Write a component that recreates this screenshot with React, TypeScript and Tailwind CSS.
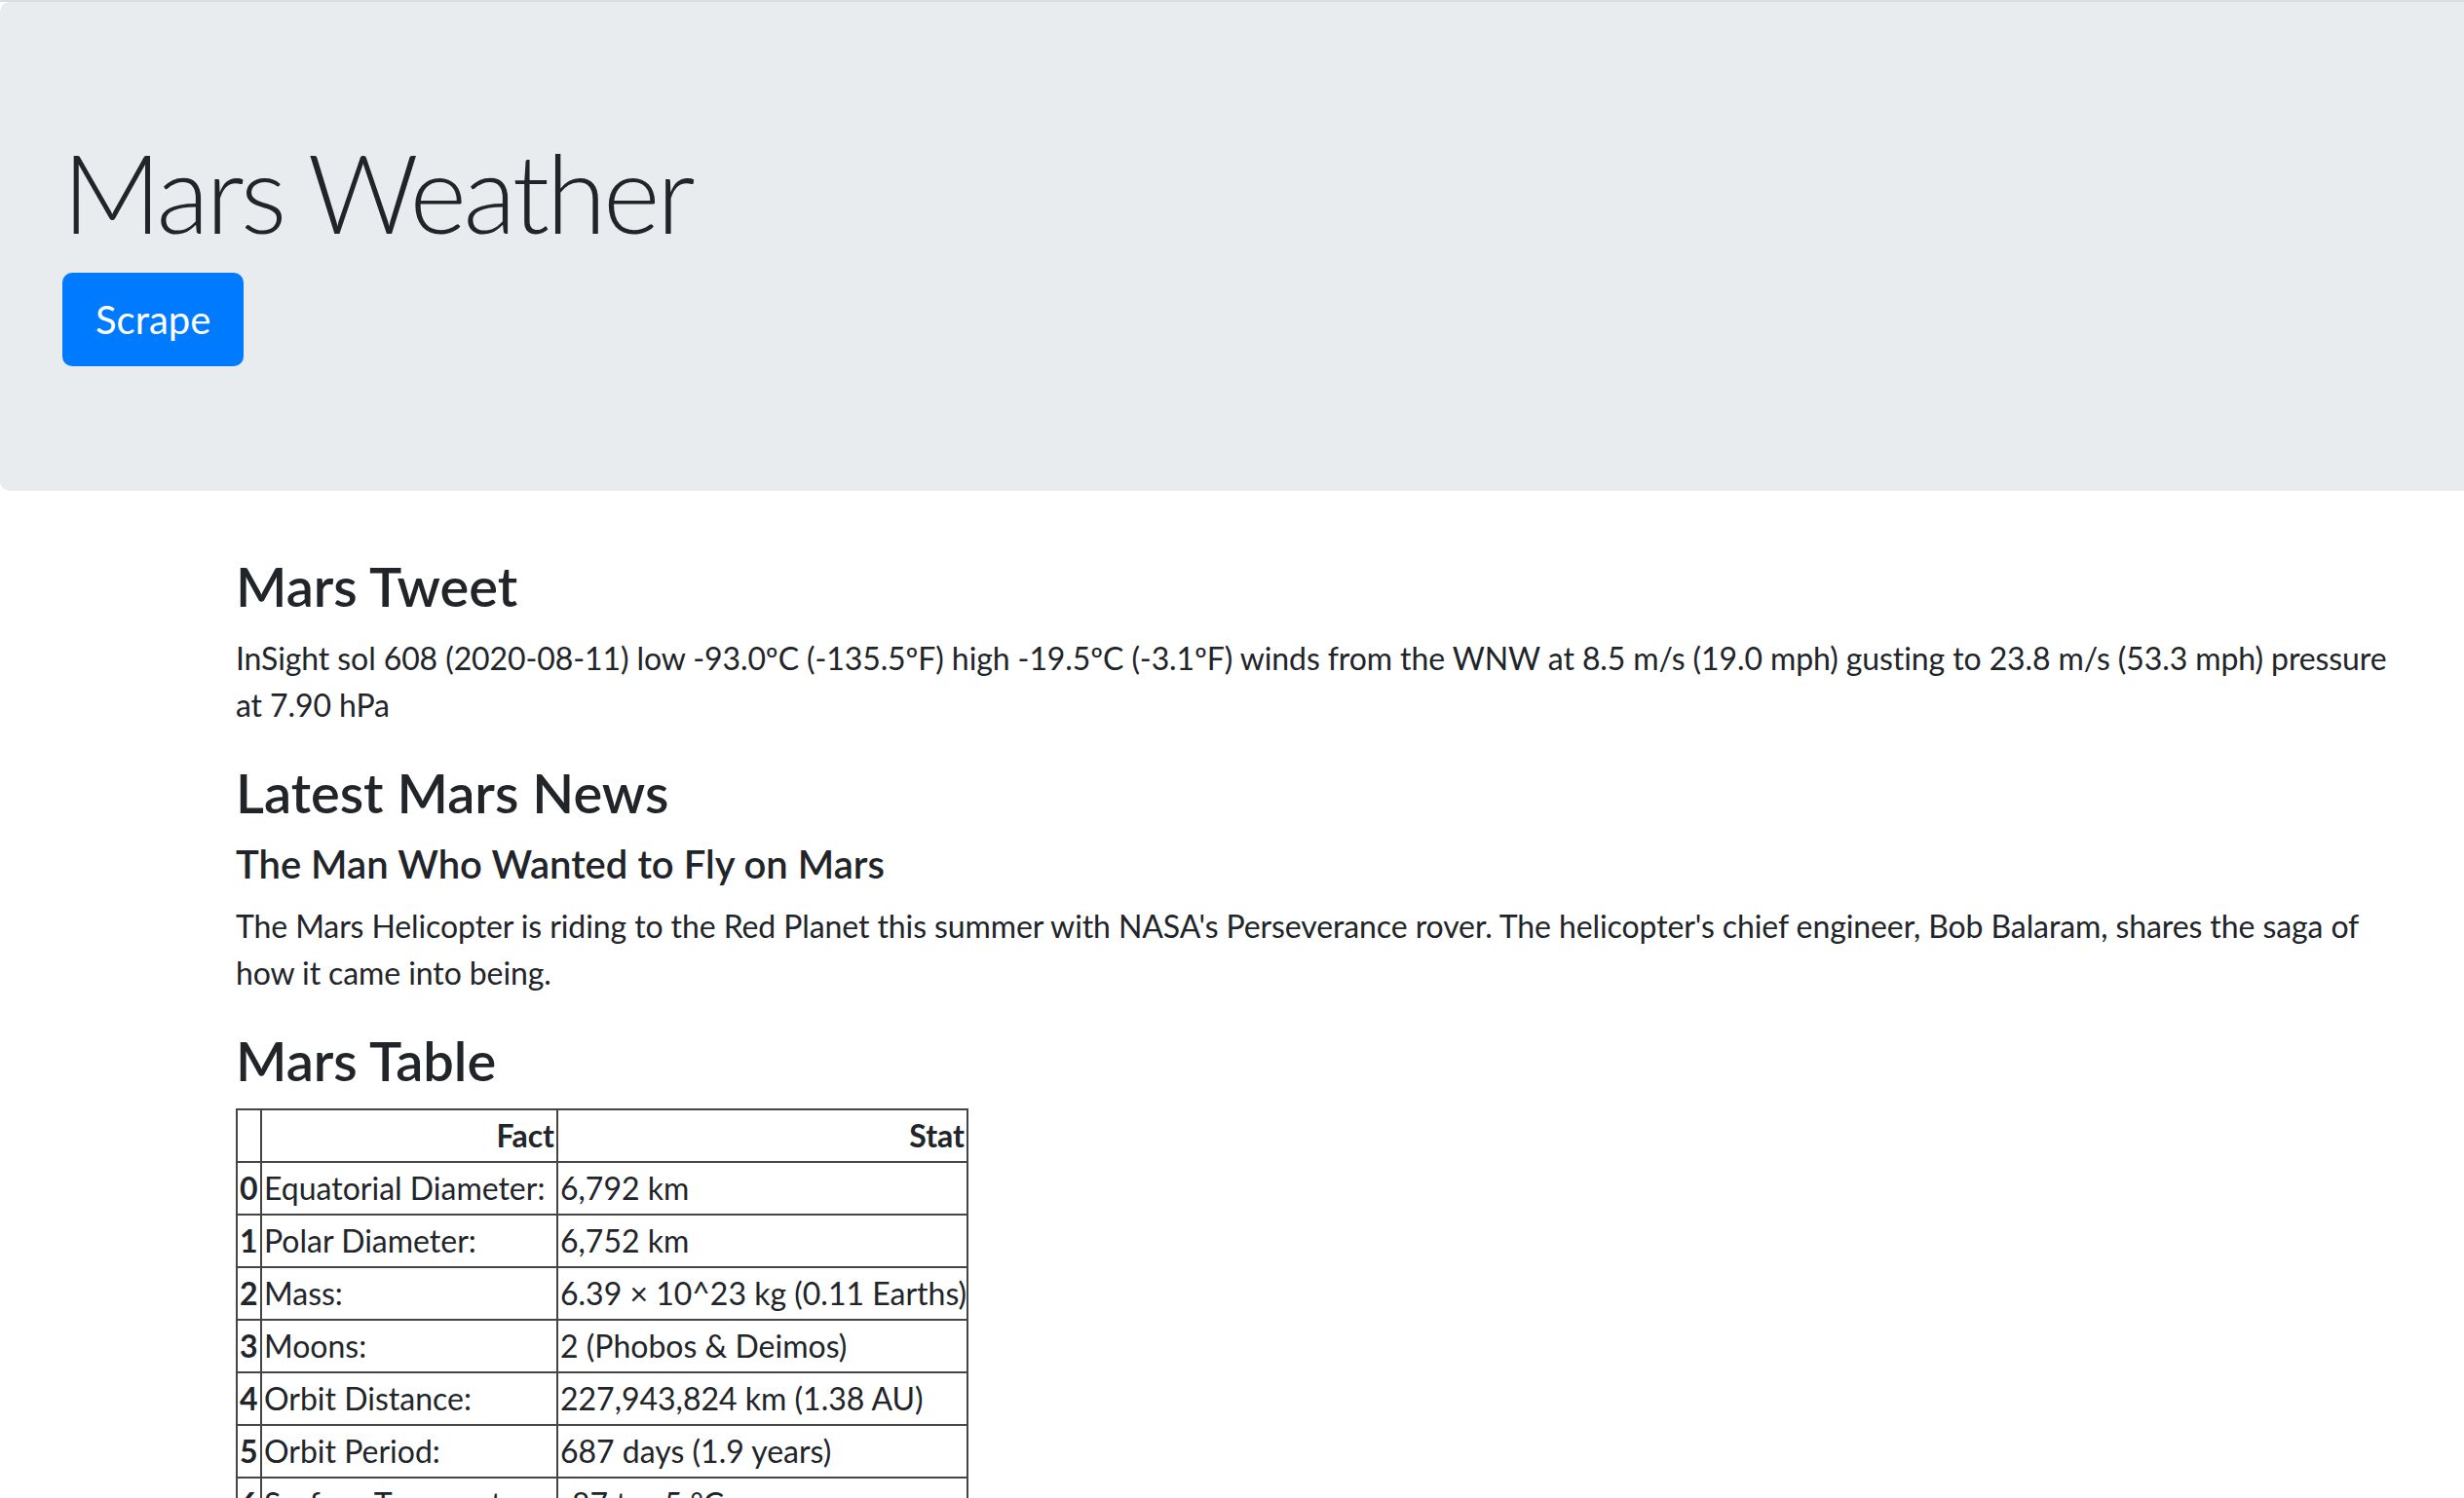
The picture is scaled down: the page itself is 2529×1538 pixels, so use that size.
import React from 'react';

// Mars facts scraped into a pandas-style table
const marsFacts = [
  { fact: 'Equatorial Diameter:', stat: '6,792 km' },
  { fact: 'Polar Diameter:', stat: '6,752 km' },
  { fact: 'Mass:', stat: '6.39 × 10^23 kg (0.11 Earths)' },
  { fact: 'Moons:', stat: '2 (Phobos & Deimos)' },
  { fact: 'Orbit Distance:', stat: '227,943,824 km (1.38 AU)' },
  { fact: 'Orbit Period:', stat: '687 days (1.9 years)' },
  { fact: 'Surface Temperature:', stat: '-87 to -5 °C' },
  { fact: 'First Record:', stat: '2nd millennium BC' },
  { fact: 'Recorded By:', stat: 'Egyptian astronomers' },
];

const cell = 'border-2 border-[#454545] px-[2px] py-[2px] leading-[48px] whitespace-nowrap';

const App: React.FC = () => {
  return (
    <div className="h-[1538px] overflow-hidden bg-white text-[#212529] font-['Segoe_UI',Lato,'Liberation_Sans',sans-serif]">
      <div className="border-t-2 border-[#dadde1]">
        {/* Jumbotron */}
        <div className="bg-[#e9ecef] rounded-l-[10px] px-[64px] py-[128px] mb-[64px]">
          <h1 className="text-[112px] leading-[1.2] font-light tracking-[-0.03em] mb-[16px]">Mars Weather</h1>
          <button className="bg-[#007bff] border-2 border-[#007bff] text-white text-[40px] leading-[1.5] px-[32px] py-[16px] rounded-[10px]">
            Scrape
          </button>
        </div>

        <div className="pl-[242px] w-[2482px]">
          <h3 className="text-[56px] leading-[1.2] font-semibold mb-[16px]">Mars Tweet</h3>
          <p className="text-[32px] leading-[48px] tracking-[-0.003em] mb-[32px]">
            InSight sol 608 (2020-08-11) low -93.0ºC (-135.5ºF) high -19.5ºC (-3.1ºF) winds from the WNW at 8.5 m/s (19.0 mph) gusting to 23.8 m/s (53.3 mph) pressure at 7.90 hPa
          </p>

          <h3 className="text-[56px] leading-[1.2] font-semibold mb-[16px]">Latest Mars News</h3>
          <h5 className="text-[40px] leading-[1.2] font-semibold mb-[16px]">The Man Who Wanted to Fly on Mars</h5>
          <p className="text-[32px] leading-[48px] tracking-[-0.003em] mb-[32px]">
            The Mars Helicopter is riding to the Red Planet this summer with NASA's Perseverance rover. The helicopter's chief engineer, Bob Balaram, shares the saga of how it came into being.
          </p>

          <h3 className="text-[56px] leading-[1.2] font-semibold mb-[16px]">Mars Table</h3>
          <table className="table-fixed w-[750px] border-collapse border-2 border-[#454545] text-[32px]">
            <colgroup>
              <col className="w-[25px]" />
              <col className="w-[304px]" />
              <col className="w-[421px]" />
            </colgroup>
            <thead>
              <tr className="text-right">
                <th className={cell}></th>
                <th className={`${cell} font-bold`}>Fact</th>
                <th className={`${cell} font-bold`}>Stat</th>
              </tr>
            </thead>
            <tbody>
              {marsFacts.map((row, i) => (
                <tr key={i}>
                  <th className={`${cell} font-bold text-left`}>{i}</th>
                  <td className={cell}>{row.fact}</td>
                  <td className={cell}>{row.stat}</td>
                </tr>
              ))}
            </tbody>
          </table>
        </div>
      </div>
    </div>
  );
};

export default App;
